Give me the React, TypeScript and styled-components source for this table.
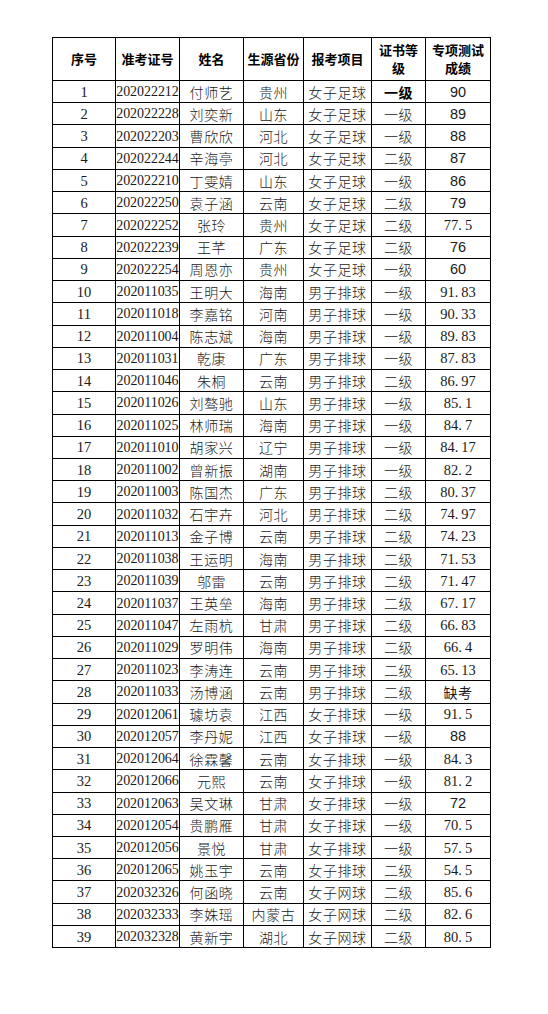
import React from "react";
import styled, { createGlobalStyle } from "styled-components";

const GlobalStyle = createGlobalStyle`
  html, body { margin: 0; padding: 0; background: #ffffff; }
  body { font-family: "Liberation Serif", "Noto Sans CJK SC", serif; color: #1a1a1a; }
`;

const Page = styled.div`
  padding: 37px 0 0 52px;
  width: 548px;
  box-sizing: border-box;
`;

const Table = styled.table`
  border-collapse: collapse;
  table-layout: fixed;
  width: 438px;
`;

const HeadCell = styled.th`
  border: 1px solid #000;
  height: 42px;
  padding: 0 2px;
  font-family: "Noto Sans CJK SC", sans-serif;
  font-weight: 700;
  font-size: 13px;
  line-height: 18px;
  text-align: center;
  vertical-align: middle;
  color: #000;
`;

const Cell = styled.td<{ $font?: "serif" | "sans" | "cjk"; $bold?: boolean }>`
  border: 1px solid #000;
  height: 21.24px;
  padding: 0;
  text-align: center;
  vertical-align: middle;
  white-space: nowrap;
  font-size: ${(p) => (p.$font === "cjk" ? "14px" : "14.5px")};
  letter-spacing: ${(p) => (p.$font === "cjk" ? "0.6px" : "0")};
  line-height: 20px;
  font-weight: ${(p) => (p.$bold ? 700 : 300)};
  font-family: ${(p) =>
    p.$font === "sans"
      ? `"Liberation Sans", "Noto Sans CJK SC", sans-serif`
      : p.$font === "cjk"
      ? `"Noto Sans CJK SC", sans-serif`
      : `"Liberation Serif", "Noto Sans CJK SC", serif`};
  color: ${(p) => (p.$bold ? "#000" : "#1a1a1a")};
`;

const NumText = styled.span`
  font-weight: 400;
`;

const ExamNo = styled.span`
  font-weight: 400;
  font-size: 14px;
  letter-spacing: -0.05px;
`;

type Row = [string, string, string, string, string, string];

const rows: Row[] = [
  ["202022212", "付师艺", "贵州", "女子足球", "一级", "90"],
  ["202022228", "刘奕新", "山东", "女子足球", "一级", "89"],
  ["202022203", "曹欣欣", "河北", "女子足球", "一级", "88"],
  ["202022244", "辛海亭", "河北", "女子足球", "二级", "87"],
  ["202022210", "丁雯婧", "山东", "女子足球", "一级", "86"],
  ["202022250", "袁子涵", "云南", "女子足球", "二级", "79"],
  ["202022252", "张玲", "贵州", "女子足球", "二级", "77.5"],
  ["202022239", "王芊", "广东", "女子足球", "二级", "76"],
  ["202022254", "周恩亦", "贵州", "女子足球", "一级", "60"],
  ["202011035", "王明大", "海南", "男子排球", "一级", "91.83"],
  ["202011018", "李嘉铭", "河南", "男子排球", "一级", "90.33"],
  ["202011004", "陈志斌", "海南", "男子排球", "一级", "89.83"],
  ["202011031", "乾康", "广东", "男子排球", "一级", "87.83"],
  ["202011046", "朱桐", "云南", "男子排球", "二级", "86.97"],
  ["202011026", "刘骜驰", "山东", "男子排球", "一级", "85.1"],
  ["202011025", "林师瑞", "海南", "男子排球", "一级", "84.7"],
  ["202011010", "胡家兴", "辽宁", "男子排球", "一级", "84.17"],
  ["202011002", "曾新振", "湖南", "男子排球", "一级", "82.2"],
  ["202011003", "陈国杰", "广东", "男子排球", "二级", "80.37"],
  ["202011032", "石宇卉", "河北", "男子排球", "二级", "74.97"],
  ["202011013", "金子博", "云南", "男子排球", "二级", "74.23"],
  ["202011038", "王运明", "海南", "男子排球", "二级", "71.53"],
  ["202011039", "邬雷", "云南", "男子排球", "二级", "71.47"],
  ["202011037", "王英垒", "海南", "男子排球", "二级", "67.17"],
  ["202011047", "左雨杭", "甘肃", "男子排球", "二级", "66.83"],
  ["202011029", "罗明伟", "海南", "男子排球", "二级", "66.4"],
  ["202011023", "李涛连", "云南", "男子排球", "二级", "65.13"],
  ["202011033", "汤博涵", "云南", "男子排球", "二级", "缺考"],
  ["202012061", "璩坊袁", "江西", "女子排球", "一级", "91.5"],
  ["202012057", "李丹妮", "江西", "女子排球", "一级", "88"],
  ["202012064", "徐霖馨", "云南", "女子排球", "一级", "84.3"],
  ["202012066", "元熙", "云南", "女子排球", "一级", "81.2"],
  ["202012063", "吴文琳", "甘肃", "女子排球", "一级", "72"],
  ["202012054", "贵鹏雁", "甘肃", "女子排球", "一级", "70.5"],
  ["202012056", "景悦", "甘肃", "女子排球", "一级", "57.5"],
  ["202012065", "姚玉宇", "云南", "女子排球", "二级", "54.5"],
  ["202032326", "何函晓", "云南", "女子网球", "二级", "85.6"],
  ["202032333", "李姝瑶", "内蒙古", "女子网球", "二级", "82.6"],
  ["202032328", "黄新宇", "湖北", "女子网球", "二级", "80.5"],
];

const widths = [63, 64, 64, 60, 68, 54, 65];

function scoreFont(s: string): "serif" | "sans" | "cjk" {
  if (/^\d+$/.test(s)) return "sans";
  if (/^[\d.]+$/.test(s)) return "serif";
  return "cjk";
}

const Gap = styled.span`
  display: inline-block;
  width: 3px;
`;

const Score: React.FC<{ value: string }> = ({ value }) => {
  if (value.includes(".")) {
    const [a, b] = value.split(".");
    return (
      <NumText>
        {a}.
        <Gap />
        {b}
      </NumText>
    );
  }
  return <NumText>{value}</NumText>;
};

export default function App() {
  return (
    <>
      <GlobalStyle />
      <Page>
        <Table>
          <colgroup>
            {widths.map((w, i) => (
              <col key={i} style={{ width: `${w}px` }} />
            ))}
          </colgroup>
          <thead>
            <tr>
              <HeadCell>序号</HeadCell>
              <HeadCell>准考证号</HeadCell>
              <HeadCell>姓名</HeadCell>
              <HeadCell>生源省份</HeadCell>
              <HeadCell>报考项目</HeadCell>
              <HeadCell>证书等级</HeadCell>
              <HeadCell>专项测试成绩</HeadCell>
            </tr>
          </thead>
          <tbody>
            {rows.map((r, i) => (
              <tr key={i}>
                <Cell $font="serif">
                  <NumText>{i + 1}</NumText>
                </Cell>
                <Cell $font="serif">
                  <ExamNo>{r[0]}</ExamNo>
                </Cell>
                <Cell $font="cjk">{r[1]}</Cell>
                <Cell $font="cjk">{r[2]}</Cell>
                <Cell $font="cjk">{r[3]}</Cell>
                <Cell $font="cjk" $bold={i === 0}>
                  {r[4]}
                </Cell>
                <Cell $font={scoreFont(r[5])}>
                  <Score value={r[5]} />
                </Cell>
              </tr>
            ))}
          </tbody>
        </Table>
      </Page>
    </>
  );
}
